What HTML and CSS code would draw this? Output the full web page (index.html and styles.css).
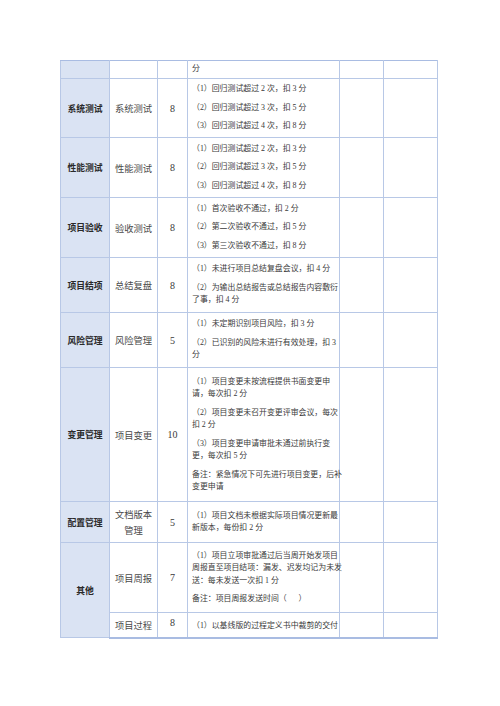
FILE: index.html
```html
<!DOCTYPE html>
<html lang="zh-CN">
<head>
<meta charset="utf-8">
<title>评分表</title>
<link rel="stylesheet" href="styles.css">
</head>
<body>
<div class="page">
<table class="score">
<colgroup>
<col class="c1"><col class="c2"><col class="c3"><col class="c4"><col class="c5"><col class="c6">
</colgroup>
<tbody>
<tr class="r0">
<td class="cat"></td><td class="item"></td><td class="num"></td>
<td class="desc"><p>分</p></td><td></td><td></td>
</tr>
<tr class="r1">
<td class="cat">系统测试</td><td class="item">系统测试</td><td class="num">8</td>
<td class="desc"><p>（1）回归测试超过 2 次，扣 3 分</p><p>（2）回归测试超过 3 次，扣 5 分</p><p>（3）回归测试超过 4 次，扣 8 分</p></td><td></td><td></td>
</tr>
<tr class="r2">
<td class="cat">性能测试</td><td class="item">性能测试</td><td class="num">8</td>
<td class="desc"><p>（1）回归测试超过 2 次，扣 3 分</p><p>（2）回归测试超过 3 次，扣 5 分</p><p>（3）回归测试超过 4 次，扣 8 分</p></td><td></td><td></td>
</tr>
<tr class="r3">
<td class="cat">项目验收</td><td class="item">验收测试</td><td class="num">8</td>
<td class="desc"><p>（1）首次验收不通过，扣 2 分</p><p>（2）第二次验收不通过，扣 5 分</p><p>（3）第三次验收不通过，扣 8 分</p></td><td></td><td></td>
</tr>
<tr class="r4">
<td class="cat">项目结项</td><td class="item">总结复盘</td><td class="num">8</td>
<td class="desc"><p>（1）未进行项目总结复盘会议，扣 4 分</p><p>（2）为输出总结报告或总结报告内容敷衍<br>了事，扣 4 分</p></td><td></td><td></td>
</tr>
<tr class="r5">
<td class="cat">风险管理</td><td class="item">风险管理</td><td class="num">5</td>
<td class="desc"><p>（1）未定期识别项目风险，扣 3 分</p><p>（2）已识别的风险未进行有效处理，扣 3<br>分</p></td><td></td><td></td>
</tr>
<tr class="r6">
<td class="cat">变更管理</td><td class="item">项目变更</td><td class="num">10</td>
<td class="desc"><p>（1）项目变更未按流程提供书面变更申<br>请，每次扣 2 分</p><p>（2）项目变更未召开变更评审会议，每次<br>扣 2 分</p><p>（3）项目变更申请审批未通过前执行变<br>更，每次扣 5 分</p><p>备注：紧急情况下可先进行项目变更，后补<br>变更申请</p></td><td></td><td></td>
</tr>
<tr class="r7">
<td class="cat">配置管理</td><td class="item two">文档版本<br>管理</td><td class="num">5</td>
<td class="desc"><p>（1）项目文档未根据实际项目情况更新最<br>新版本，每份扣 2 分</p></td><td></td><td></td>
</tr>
<tr class="r8">
<td class="cat" rowspan="2">其他</td><td class="item">项目周报</td><td class="num">7</td>
<td class="desc"><p>（1）项目立项审批通过后当周开始发项目<br>周报直至项目结项：漏发、迟发均记为未发<br>送：每未发送一次扣 1 分</p><p>备注：项目周报发送时间（&nbsp;&nbsp;&nbsp;&nbsp;&nbsp;&nbsp;）</p></td><td></td><td></td>
</tr>
<tr class="r9">
<td class="item">项目过程</td><td class="num top">8</td>
<td class="desc"><p>（1）以基线版的过程定义书中裁剪的交付</p></td><td></td><td></td>
</tr>
</tbody>
</table>
</div>
</body>
</html>
```
FILE: styles.css
```css
html, body {
  margin: 0;
  padding: 0;
  background: #ffffff;
}
.page {
  padding: 60px 0 0 60px;
}
.score {
  border-collapse: collapse;
  table-layout: fixed;
  width: 377px;
  font-family: "Liberation Serif", "Noto Sans CJK SC", serif;
  color: #3a3a3a;
}
.c1 { width: 49px; }
.c2 { width: 48px; }
.c3 { width: 30px; }
.c4 { width: 152px; }
.c5 { width: 44px; }
.c6 { width: 54px; }
.score td {
  border: 1px solid #b8c8e6;
  padding: 0;
  vertical-align: middle;
}
.score tr:last-child td {
  border-bottom: 2px solid #a9bce2;
}
.score tr:first-child td {
  border-top: 1px solid #a9bce2;
}
.r0 { height: 18px; }
.r1 { height: 59px; }
.r2 { height: 60px; }
.r3 { height: 60px; }
.r4 { height: 55px; }
.r5 { height: 55px; }
.r6 { height: 134px; }
.r7 { height: 41px; }
.r8 { height: 70px; }
.r9 { height: 25px; }
.cat {
  background: #dae3f3;
  text-align: center;
  font-family: "Noto Sans CJK SC", sans-serif;
  font-weight: 700;
  font-size: 8.8px;
  color: #2a2a2a;
}
.item {
  text-align: center;
  font-family: "Noto Sans CJK SC", sans-serif;
  font-size: 9.3px;
  color: #4a4a4a;
}
.item.two {
  line-height: 16.5px;
}
.num {
  text-align: center;
  font-size: 10px;
  color: #3a3a3a;
}
.num.top {
  vertical-align: top;
  padding-top: 4px;
}
.desc {
  padding: 0 0 0 4px !important;
  font-family: "Liberation Serif", "Noto Sans CJK SC", serif;
  font-size: 7.9px;
  white-space: nowrap;
  color: #3a3a3a;
}
.desc p {
  margin: 0;
  line-height: 12.5px;
}
.desc p + p {
  margin-top: 6px;
}
.r9 .desc {
  vertical-align: top;
  padding-top: 7px !important;
}
```
